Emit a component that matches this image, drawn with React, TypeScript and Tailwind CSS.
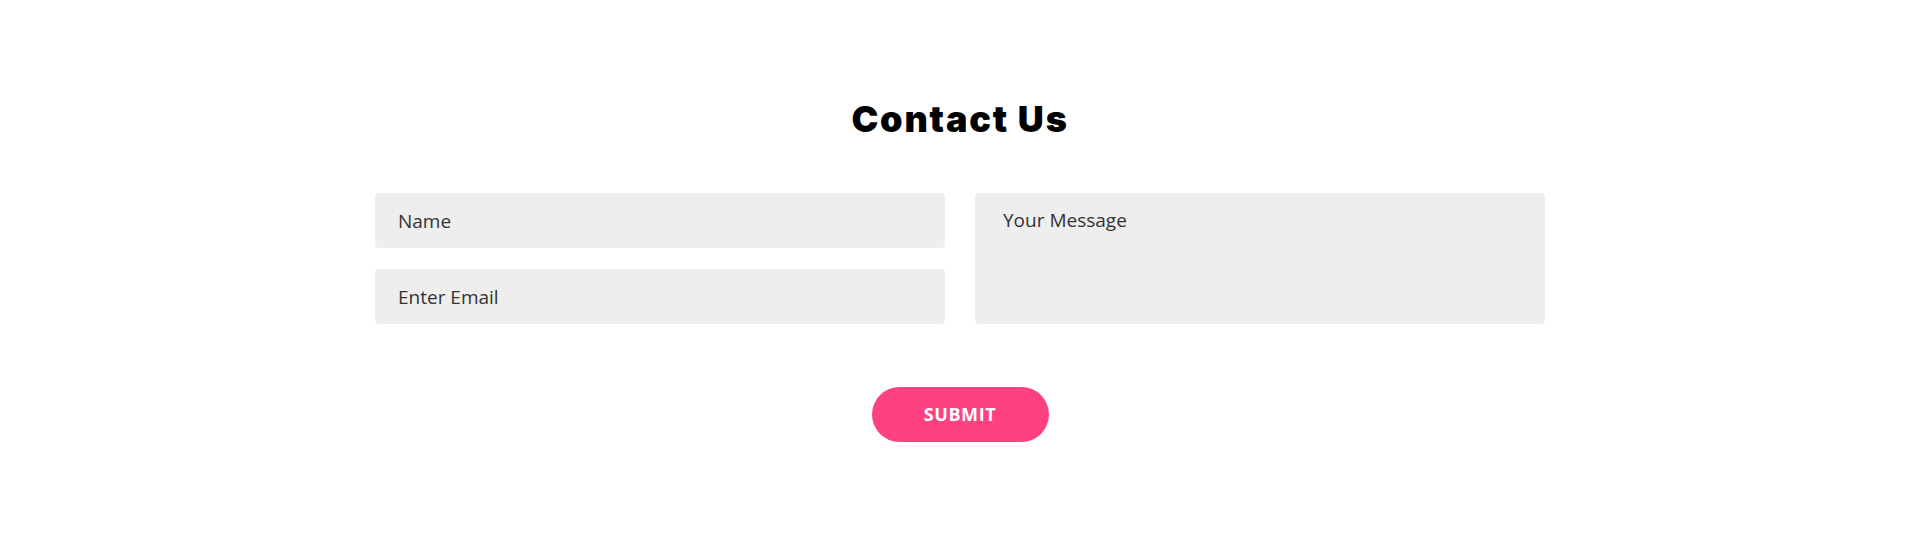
import React from 'react';

const App: React.FC = () => {
  return (
    <div className="min-h-[546px] bg-white pt-[100px]" style={{ fontFamily: '"Open Sans", sans-serif' }}>
      <div className="mx-auto w-[1170px]">
        <h2 className="text-center text-[36px] leading-[38px] font-black text-black tracking-[1.8px]" style={{ fontFamily: 'Inter, sans-serif' }}>
          Contact Us
        </h2>

        {/* Form */}
        <form className="mt-[55px]" onSubmit={(e) => e.preventDefault()}>
          <div className="grid grid-cols-2 gap-[30px]">
            <div className="flex flex-col gap-[21px]">
              <input
                type="text"
                placeholder="Name"
                className="h-[55px] w-full rounded bg-[#eeeeee] px-[23px] text-[19px] text-[#333] placeholder:text-[#333] outline-none"
              />
              <input
                type="email"
                placeholder="Enter Email"
                className="h-[55px] w-full rounded bg-[#eeeeee] px-[23px] text-[19px] text-[#333] placeholder:text-[#333] outline-none"
              />
            </div>
            <textarea
              placeholder="Your Message"
              className="h-[131px] w-full resize-none rounded bg-[#eeeeee] px-[28px] pt-[14px] text-[19px] leading-[27px] text-[#333] placeholder:text-[#333] outline-none"
            />
          </div>
          <div className="mt-[63px] flex justify-center">
            <button
              type="submit"
              className="h-[55px] w-[177px] rounded-full bg-[#ff4081] text-[18px] font-bold tracking-[0.6px] text-white"
            >
              SUBMIT
            </button>
          </div>
        </form>
      </div>
    </div>
  );
};

export default App;
